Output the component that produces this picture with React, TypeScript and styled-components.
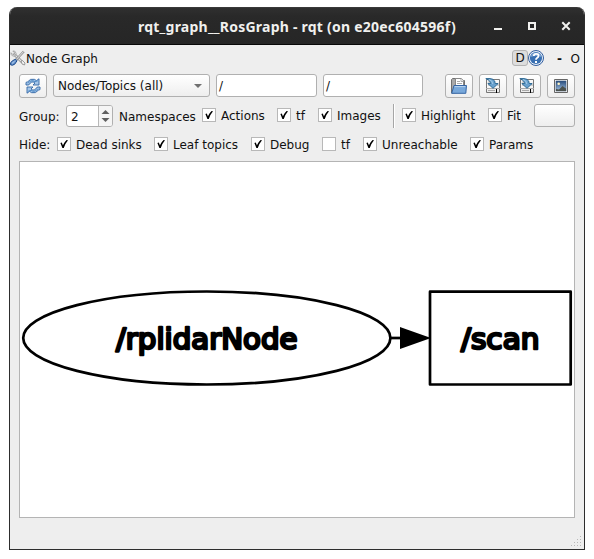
import React from "react";
import styled, { createGlobalStyle } from "styled-components";

const Global = createGlobalStyle`
  * { box-sizing: border-box; }
  html, body { margin: 0; background: #fff; }
  body { font: 12px/16px "DejaVu Sans", sans-serif; color: #111; overflow: hidden; }
`;

const Window = styled.main`
  width: 576px;
  height: 543px;
  margin: 7px 0 0 9px;
  border: 1px solid #2d2d2d;
  border-top: 0;
  border-radius: 8px 8px 0 0;
  background: #eeeeee;
  display: flex;
  flex-direction: column;
  overflow: hidden;
`;

const TitleBar = styled.header`
  height: 38px;
  flex: none;
  display: flex;
  align-items: center;
  padding: 2px 12px 0 128px;
  background: linear-gradient(#303030, #292929 8px, #262626);
  border-top: 1px solid #3a3a3a;
  border-bottom: 1px solid #080808;
  color: #f0f0ee;
`;

const Title = styled.h1`
  margin: 0;
  flex: 1;
  font: 700 14px/20px "Noto Sans", sans-serif;
  letter-spacing: 0.23px;
  white-space: pre;
`;

const WindowControls = styled.svg`
  width: 80px;
  height: 14px;
  margin-top: -3px;
`;

const DockBar = styled.div`
  height: 29px;
  flex: none;
  display: flex;
  align-items: center;
  padding: 0 4px 3px 0;
`;

const DockTitle = styled.span`
  flex: 1;
  padding-top: 1px;
`;

const DButton = styled.button`
  width: 16px;
  height: 16px;
  padding: 0;
  border: 1px solid #b4b4b4;
  border-radius: 3px;
  background: #dddddd;
  font: 12px/14px "DejaVu Sans", sans-serif;
  color: #111;
`;

const DockGlyph = styled.span<{ $w: number; $bold?: boolean }>`
  width: ${(p) => p.$w}px;
  font-weight: ${(p) => (p.$bold ? 700 : 400)};
  text-align: right;
  padding-top: 1px;
`;

const Row = styled.div<{ $h: number; $gap?: number }>`
  height: ${(p) => p.$h}px;
  flex: none;
  margin: 0 9px;
  display: flex;
  align-items: flex-start;
  gap: ${(p) => p.$gap ?? 0}px;
`;

const Button = styled.button<{ $w?: number; $h?: number }>`
  width: ${(p) => p.$w ?? 28}px;
  height: ${(p) => p.$h ?? 24}px;
  flex: none;
  display: flex;
  align-items: center;
  justify-content: center;
  padding: 0;
  border: 1px solid #b0b0b0;
  border-radius: 3px;
  background: linear-gradient(#ffffff, #eeeeee);
`;

const Combo = styled.div`
  width: 157px;
  height: 23px;
  padding: 0 7px 0 4px;
  display: flex;
  align-items: center;
  justify-content: space-between;
  border: 1px solid #b0b0b0;
  border-radius: 3px;
  background: linear-gradient(#ffffff, #eeeeee);
`;

const Field = styled.div<{ $w: number }>`
  width: ${(p) => p.$w}px;
  height: 23px;
  padding: 3px 2px;
  border: 1px solid #b0b0b0;
  border-radius: 3px;
  background: #fff;
`;

const Actions = styled.div`
  display: flex;
  gap: 6px;
  margin-left: auto;
`;

const Label = styled.span<{ $w: number }>`
  width: ${(p) => p.$w}px;
  flex: none;
  padding-top: 5px;
  white-space: nowrap;
`;

const Spin = styled.div`
  width: 47px;
  height: 22px;
  margin: 1px 6px 0 0;
  flex: none;
  display: flex;
  border: 1px solid #b0b0b0;
  border-radius: 3px;
  background: #fff;
  overflow: hidden;
`;

const SpinValue = styled.span`
  flex: 1;
  padding: 3px 4px;
`;

const SpinArrows = styled.svg`
  width: 14px;
  height: 20px;
  border-left: 1px solid #b8b8b8;
  background: #f5f5f5;
`;

const CheckLabel = styled.label<{ $w: number; $h: number }>`
  width: ${(p) => p.$w}px;
  height: ${(p) => p.$h}px;
  flex: none;
  display: flex;
  align-items: center;
  gap: 5px;
  white-space: nowrap;
`;

const CheckText = styled.span`
  padding-top: 2px;
`;

const Box = styled.svg`
  width: 14px;
  height: 14px;
  flex: none;
  background: #fff;
  border: 1px solid #b8b8b8;
`;

const Separator = styled.i`
  width: 2px;
  height: 24px;
  margin-right: 7px;
  border-left: 1px solid #a6a6a6;
  border-right: 1px solid #fff;
`;

const Canvas = styled.section`
  width: 556px;
  height: 357px;
  flex: none;
  margin: 0 9px;
  border: 1px solid #b4b4b4;
  background: #fff;
  svg { display: block; }
`;

const StatusBar = styled.footer`
  flex: 1;
  display: flex;
  align-items: flex-end;
  justify-content: flex-end;
  padding: 0 2px 2px 0;
`;

function Check({ label, w, h = 22, off }: { label: string; w: number; h?: number; off?: boolean }) {
  return (
    <CheckLabel $w={w} $h={h}>
      <Box viewBox="0 0 12 12">
        {!off && <path d="M2.4 5 3.8 4.6 4.9 7.2Q6.5 3.8 8.6 2L10 2.3Q7.4 5.2 5.8 10H4.4Z" />}
      </Box>
      <CheckText>{label}</CheckText>
    </CheckLabel>
  );
}

const ToolsIcon = () => (
  <svg width="16" height="16" viewBox="0 0 16 16" fill="none">
    <path d="M3.5 3.5 12 12" stroke="#888" strokeWidth="2.6" />
    <path d="M3.5 3.5 12 12" stroke="#e4e4e4" strokeWidth="1.3" />
    <path d="M1 2.7 2.7 4.4H4.4V2.7L2.8 1H4.6L6.2 3.3 5 6 2.7 6.1 1 4.3Z" fill="#ddd" stroke="#888" strokeWidth=".6" />
    <path d="m11 11 1 3 2.5 1 .5-2-2.4-2.4Z" fill="#eee" stroke="#888" strokeWidth=".8" />
    <path d="m13.8 1.4-8 8.6" stroke="#888" strokeWidth="2.2" />
    <path d="m13.8 1.4-8 8.6" stroke="#eee" />
    <path d="M5.6 9.2 7 10.8 4.7 14.2Q2 16 .6 14.8-.2 12.8 2.5 10.7Z" fill="#6d98d0" stroke="#174587" />
    <path d="m2 13.4 2.6-2.2" stroke="#b7d2f0" />
  </svg>
);

const HelpIcon = () => (
  <svg width="16" height="16" viewBox="0 0 16 16">
    <circle cx="8" cy="8" r="7.5" fill="#e8eff8" stroke="#315d9e" />
    <circle cx="8" cy="8" r="6.1" fill="#3970b2" />
    <path d="M2.5 7Q8 4.8 13.5 7A5.7 5.7 0 0 0 2.5 7" fill="#7ca3d2" />
    <path d="M5.8 6.1Q5.8 3.8 8.2 3.8T10.5 5.8Q10.5 7.1 9 8 8 8.6 8 9.7" fill="none" stroke="#fff" strokeWidth="1.8" />
    <path d="M7 11h2v2H7z" fill="#fff" />
  </svg>
);

const RefreshIcon = () => (
  <svg width="16" height="16" viewBox="0 0 16 16" strokeLinejoin="round">
    <path d="M1 7V4.4L2.7 3.8Q5.2.2 9.3 1.3L11.5 2.6 14 .8V7H8l2-2Q6.5 2.2 4.1 6.7L3 7Z" fill="#a6c6e8" stroke="#3267a6" strokeWidth=".9" />
    <path d="M15 9v2.6l-1.7.6Q10.8 15.8 6.7 14.7L4.5 13.4 2 15.2V9h6l-2 2q3.5 2.8 5.9-1.7L13 9Z" fill="#a6c6e8" stroke="#3267a6" strokeWidth=".9" />
    <path d="M3 5.3Q6 1.2 10 3.6l2.8-.8M13 10.7q-3 4.1-7 1.7l-2.8.8" fill="none" stroke="#508bc6" />
  </svg>
);

const OpenIcon = () => (
  <svg width="16" height="16" viewBox="0 0 16 16">
    <path d="M.5 15V1.5L1.5.5H5l1 2h7.5V14Z" fill="#a9a9a9" stroke="#707070" />
    <path d="M4.5 9V.5h5.8l2.2 2.2V9Z" fill="#fff" stroke="#888" />
    <path d="M10 1v2.5h2.5M6 3.5h3M6 5.5h5" stroke="#aaa" fill="none" />
    <path d="M3 7.5h12.5L14.8 15.3H.7Z" fill="#78a8da" stroke="#3465a4" />
    <path d="M3.6 8.6h10.7" stroke="#b9d3ef" />
  </svg>
);

const SaveIcon = () => (
  <svg width="16" height="16" viewBox="0 0 16 16">
    <path d="M1.5 1.5h13v13h-13Z" fill="#f7f7f7" stroke="#777" />
    <path d="M3 4h2M3 7h2m7 0h2M1 10.5h14" stroke="#aaa" />
    <path d="M2 11h12v3H2Z" fill="#ededed" />
    <path d="M3 12.5h7" stroke="#aaa" />
    <path d="M11 11h1v4h-1z" fill="#000" />
    <path d="M.8.6Q10.4-.4 10.2 5.5h3L8 10.3 2.8 5.5h3Q5.7 2.4.8.6Z" fill="#69a1ce" stroke="#26638f" strokeWidth=".9" strokeLinejoin="round" />
    <path d="M4 1.6Q7.6 2.2 7.8 6" fill="none" stroke="#a6cce8" />
  </svg>
);

const ImageIcon = () => (
  <svg width="16" height="16" viewBox="0 0 16 16">
    <defs>
      <linearGradient id="sky" x2="0" y2="1">
        <stop stopColor="#294d7e" />
        <stop offset="1" stopColor="#a5c4e3" />
      </linearGradient>
    </defs>
    <path d="M1.5 1.5h13v13h-13Z" fill="#eee" stroke="#666" />
    <path d="M3 3h10v10H3Z" fill="url(#sky)" stroke="#35547c" strokeWidth=".5" />
    <path d="M3 13v-2l3 .4L9.5 8l3.5 2.5V13Z" fill="#4b514d" />
    <circle cx="5.7" cy="5.7" r="1.3" fill="#fff6c7" />
  </svg>
);

export default function App() {
  return (
    <>
      <Global />
      <Window>
        <TitleBar>
          <Title>rqt_graph__RosGraph - rqt (on e20ec604596f)</Title>
          <WindowControls viewBox="0 0 80 14" fill="none" stroke="#f1f1ef">
            <path d="M2 10h8" strokeWidth="2" />
            <path d="M37 4h6v6h-6Z" strokeWidth="2" />
            <path d="m70.3 3.3 7.4 7.4m0-7.4-7.4 7.4" strokeWidth="2" />
          </WindowControls>
        </TitleBar>
        <DockBar>
          <ToolsIcon />
          <DockTitle>Node Graph</DockTitle>
          <DButton>D</DButton>
          <HelpIcon />
          <DockGlyph $w={18} $bold>-</DockGlyph>
          <DockGlyph $w={18}>O</DockGlyph>
        </DockBar>
        <Row $h={30} $gap={6}>
          <Button><RefreshIcon /></Button>
          <Combo>
            <span>Nodes/Topics (all)</span>
            <svg width="8" height="4"><path d="M0 0h8L4 4Z" fill="#707070" /></svg>
          </Combo>
          <Field $w={101}>/</Field>
          <Field $w={100}>/</Field>
          <Actions>
            <Button><OpenIcon /></Button>
            <Button><SaveIcon /></Button>
            <Button><SaveIcon /></Button>
            <Button><ImageIcon /></Button>
          </Actions>
        </Row>
        <Row $h={28}>
          <Label $w={47}>Group:</Label>
          <Spin>
            <SpinValue>2</SpinValue>
            <SpinArrows viewBox="0 0 13 20" fill="#606060">
              <path d="M2.5 8h8l-4-4ZM2.5 12h8l-4 4Z" />
            </SpinArrows>
          </Spin>
          <Label $w={83}>Namespaces</Label>
          <Check label="Actions" w={75} />
          <Check label="tf" w={41} />
          <Check label="Images" w={75} />
          <Separator />
          <Check label="Highlight" w={86} />
          <Check label="Fit" w={46} />
          <Button $w={41} $h={23} />
        </Row>
        <Row $h={29}>
          <Label $w={38}>Hide:</Label>
          <Check h={24} label="Dead sinks" w={97} />
          <Check h={24} label="Leaf topics" w={97} />
          <Check h={24} label="Debug" w={71} />
          <Check h={24} label="tf" w={41} off />
          <Check h={24} label="Unreachable" w={107} />
          <Check h={24} label="Params" w={86} />
        </Row>
        <Canvas>
          <svg width="554" height="355" viewBox="20 162 554 355" stroke="#000" strokeWidth="2.7">
            <ellipse cx="206.8" cy="338" rx="183.6" ry="46.5" fill="none" />
            <path d="M430 291.7h140.7v92.8H430Z" fill="none" strokeLinejoin="round" />
            <path d="M391 338h10" />
            <path d="m401 328.5 27 9.5-27 9.5Z" strokeWidth="2" />
            <g fontFamily="DejaVu Sans, sans-serif" fontSize="28.5" strokeWidth="2.5" strokeLinejoin="round">
              <text x="116" y="348.7" textLength="181.5" lengthAdjust="spacingAndGlyphs">/rplidarNode</text>
              <text x="461" y="348.7" textLength="78.5" lengthAdjust="spacingAndGlyphs">/scan</text>
            </g>
          </svg>
        </Canvas>
        <StatusBar>
          <svg width="11" height="11" fill="#b8b8b8">
            <path d="M9 0h1v1H9zM6 3h1v1H6zM9 3h1v1H9zM3 6h1v1H3zM6 6h1v1H6zM9 6h1v1H9zM0 9h1v1H0zM3 9h1v1H3zM6 9h1v1H6zM9 9h1v1H9z" />
          </svg>
        </StatusBar>
      </Window>
    </>
  );
}
